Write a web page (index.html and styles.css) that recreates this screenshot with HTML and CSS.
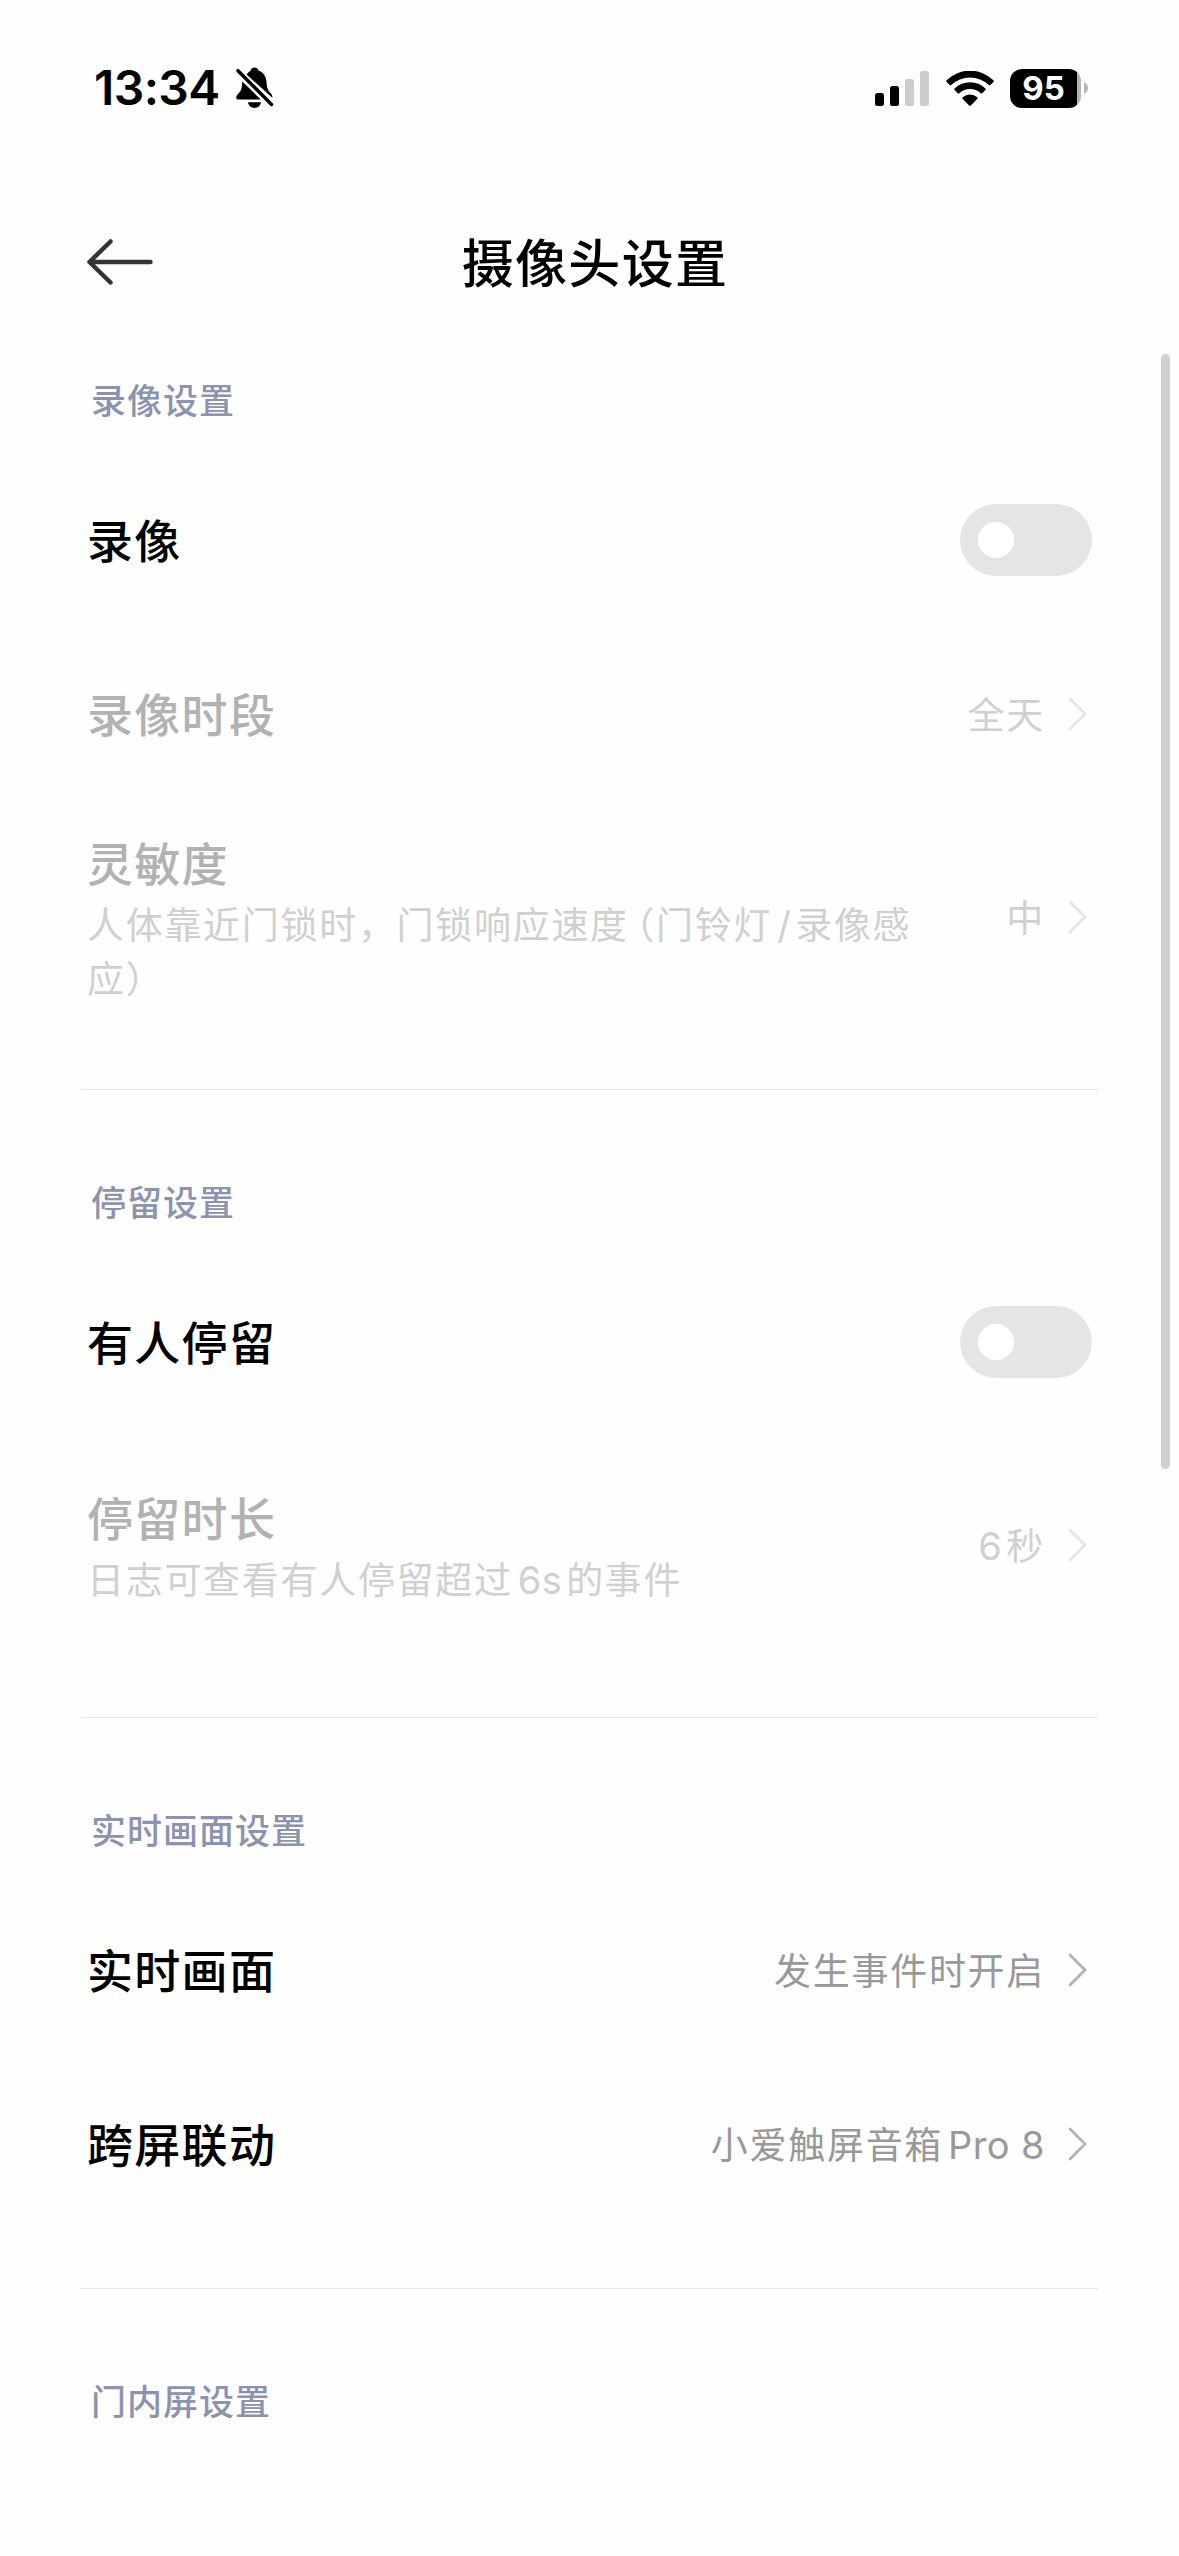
FILE: index.html
```html
<!DOCTYPE html>
<html lang="zh-CN">

<head>
    <meta charset="UTF-8">
    <meta name="viewport" content="width=device-width, initial-scale=1.0" />
    <title>摄像头设置</title>
    <link rel="stylesheet" href="styles.css">
</head>

<body>
    <!-- Status Bar -->
    <div class="status-bar">
        <div class="status-left">
            <span class="time">13:34</span>
            <svg class="bell" width="38" height="42" viewBox="0 0 38 42">
                <path d="M10.5 7.5C12.5 5 14 4.200 14.800 3.500C15 1.500 16.500 0.500 18.500 0.500C20.500 0.500 22 1.500 22.400 3.500C27.500 5.500 30.200 9.500 30.500 15C30.900 21 32 23.500 34.500 26C36 27.500 36.600 29 36.300 30.800Z" />
                <path d="M6.300 14.500L24.800 32.500H2.500C0.800 32.500 0 31.500 0.300 29.800C0.700 27.500 3.500 26 4.800 23.500C6 21 6.100 17.500 6.300 14.500Z" />
                <path d="M12 35.300H25C24.500 38.800 22 41 18.500 41C15 41 12.500 38.800 12 35.300Z" />
                <path class="slash" d="M2 3.700L35.500 37.500" />
            </svg>
        </div>
        <div class="status-right">
            <svg class="signal" width="54" height="35" viewBox="0 0 54 35">
                <rect x="0" y="22" width="9" height="13" rx="2.500" />
                <rect x="15" y="15" width="9" height="20" rx="2.500" />
                <rect class="off" x="30" y="8" width="9" height="27" rx="2.500" />
                <rect class="off" x="45" y="0" width="9" height="35" rx="2.500" />
            </svg>
            <svg class="wifi" width="48" height="35" viewBox="0 0 48 35">
                <path d="M0.600 9.200A33.500 33.500 0 0 1 47.400 9.200C47.900 9.800 47.900 10.400 47.400 10.900L44.400 13.900C43.900 14.400 43.300 14.400 42.800 13.900A27.500 27.500 0 0 0 5.200 13.900C4.700 14.400 4.100 14.400 3.600 13.900L0.600 10.900C0.100 10.400 0.100 9.800 0.600 9.200Z" />
                <path d="M8.600 17.400A22.300 22.300 0 0 1 39.400 17.400C39.900 17.900 39.900 18.500 39.400 19L36.200 22.200C35.700 22.700 35.100 22.700 34.600 22.200A15.600 15.600 0 0 0 13.400 22.200C12.900 22.700 12.300 22.700 11.800 22.200L8.600 19C8.100 18.500 8.100 17.900 8.600 17.400Z" />
                <path d="M16.700 26.200A11.500 11.500 0 0 1 31.300 26.200C31.900 26.700 31.900 27.300 31.400 27.800L24.900 34.400C24.300 35 23.700 35 23.100 34.400L16.600 27.800C16.100 27.300 16.100 26.700 16.700 26.200Z" />
            </svg>
            <div class="battery">
                <div class="battery-body">95</div>
                <svg class="battery-tip" width="4" height="12" viewBox="0 0 4 12">
                    <path d="M0 0C2.500 1.500 4 3.500 4 6C4 8.500 2.500 10.500 0 12Z" />
                </svg>
            </div>
        </div>
    </div>

    <!-- Header -->
    <header class="nav-bar">
        <svg class="back" width="68" height="48" viewBox="0 0 68 48">
            <path d="M24.500 3.500L3.500 24L24.500 44.500M3.500 24H64.500" />
        </svg>
        <h1>摄像头设置</h1>
    </header>

    <!-- Settings List -->
    <main>
        <section class="group">
            <h2>录像设置</h2>
            <div class="row">
                <div class="label">录像</div>
                <div class="switch"></div>
            </div>
            <div class="row disabled">
                <div class="label">录像时段</div>
                <div class="value">
                    <div>全天</div>
                    <svg class="arrow" width="22" height="36" viewBox="0 0 22 36"><path d="M3 3L18 18L3 33" /></svg>
                </div>
            </div>
            <div class="row tall disabled">
                <div class="text">
                    <div class="label">灵敏度</div>
                    <div class="desc">人体靠近门锁时，门锁响应速度<span class="paren">（</span>门铃灯<span class="latin">/</span>录像感应）</div>
                </div>
                <div class="value">
                    <div>中</div>
                    <svg class="arrow" width="22" height="36" viewBox="0 0 22 36"><path d="M3 3L18 18L3 33" /></svg>
                </div>
            </div>
        </section>

        <section class="group">
            <h2>停留设置</h2>
            <div class="row">
                <div class="label">有人停留</div>
                <div class="switch"></div>
            </div>
            <div class="row tall disabled">
                <div class="text">
                    <div class="label">停留时长</div>
                    <div class="desc">日志可查看有人停留超过<span class="latin">6s</span>的事件</div>
                </div>
                <div class="value">
                    <div><span class="latin">6</span>秒</div>
                    <svg class="arrow" width="22" height="36" viewBox="0 0 22 36"><path d="M3 3L18 18L3 33" /></svg>
                </div>
            </div>
        </section>

        <section class="group">
            <h2>实时画面设置</h2>
            <div class="row">
                <div class="label">实时画面</div>
                <div class="value">
                    <div>发生事件时开启</div>
                    <svg class="arrow" width="22" height="36" viewBox="0 0 22 36"><path d="M3 3L18 18L3 33" /></svg>
                </div>
            </div>
            <div class="row">
                <div class="label">跨屏联动</div>
                <div class="value">
                    <div>小爱触屏音箱<span class="latin last">Pro 8</span></div>
                    <svg class="arrow" width="22" height="36" viewBox="0 0 22 36"><path d="M3 3L18 18L3 33" /></svg>
                </div>
            </div>
        </section>

        <section class="group">
            <h2>门内屏设置</h2>
        </section>
    </main>

    <div class="scrollbar"></div>
</body>

</html>
```

FILE: styles.css
```css
* {
    margin: 0;
    padding: 0;
    box-sizing: border-box;
}

body {
    position: relative;
    height: 2556px;
    overflow: hidden;
    background-color: #fefefe;
    color: #000;
    font-family: "Noto Sans CJK SC", sans-serif;
}

svg {
    display: block;
    flex-shrink: 0;
}

/* Status Bar */
.status-bar {
    display: flex;
    justify-content: space-between;
    align-items: center;
    height: 176px;
    padding: 0 91px 0 94px;
    font-family: Inter, sans-serif;
}

.status-left,
.status-right {
    display: flex;
    align-items: center;
}

.time {
    width: 142px;
    font-size: 48px;
    font-weight: 600;
    letter-spacing: -0.6px;
    line-height: 58px;
}

.bell .slash {
    fill: none;
    stroke: #000;
    stroke-width: 3.5;
    stroke-linecap: round;
}

.signal {
    margin-right: 17px;
}

.signal .off {
    fill: #ccc;
}

.wifi {
    margin-right: 16px;
}

.battery {
    display: flex;
    align-items: center;
    gap: 3px;
}

.battery-body {
    width: 71px;
    height: 39px;
    padding-right: 4px;
    border-radius: 12px;
    background: linear-gradient(to right, #000 67px, #b3b3b3 67px);
    color: #fff;
    font-size: 33px;
    font-weight: 700;
    line-height: 39px;
    text-align: center;
}

.battery-tip {
    fill: #b3b3b3;
}

/* Header */
.nav-bar {
    display: grid;
    grid-template-columns: 68px 1fr 68px;
    align-items: center;
    height: 171px;
    padding: 0 81px 0 86px;
}

.nav-bar h1 {
    padding: 0 0 2px 6px;
    font-size: 52px;
    font-weight: 500;
    letter-spacing: 1.3px;
    line-height: 76px;
    text-align: center;
}

.back path {
    fill: none;
    stroke: #333;
    stroke-width: 4.5;
    stroke-linecap: round;
    stroke-linejoin: round;
}

/* Setting groups */
.group {
    margin: 0 81px;
    padding-bottom: 56.2px;
    border-bottom: 1px solid #e5e5e5;
}

.group + .group {
    padding-top: 59px;
}

.group:last-child {
    border-bottom: none;
}

.group h2 {
    height: 106px;
    padding-left: 10px;
    color: #8c93b0;
    font-size: 35px;
    font-weight: 500;
    letter-spacing: 1px;
    line-height: 104px;
}

.row {
    display: flex;
    justify-content: space-between;
    align-items: center;
    height: 174px;
    padding: 0 6px;
}

.row.tall {
    height: 232px;
}

.row > .label {
    padding-bottom: 4px;
}

.text {
    width: 840px;
}

.label {
    font-size: 46px;
    font-weight: 500;
    letter-spacing: 1.3px;
    line-height: 62px;
}

.desc {
    margin-top: 4px;
    color: #d0d0d0;
    font-size: 37px;
    letter-spacing: 1.7px;
    line-height: 54px;
}

.value {
    display: flex;
    align-items: center;
    padding-right: 3px;
    color: #999;
    font-size: 37px;
    letter-spacing: 1.7px;
    line-height: 54px;
    white-space: nowrap;
}

.value div {
    padding-bottom: 2px;
}

.arrow {
    margin-left: 22px;
}

.arrow path {
    fill: none;
    stroke: #b2b2b2;
    stroke-width: 2.8;
    stroke-linecap: round;
    stroke-linejoin: round;
}

/* Latin letters and digits between Chinese characters */
.latin {
    margin: 0 4px 0 5px;
    font-family: Inter, sans-serif;
    font-size: 38px;
    letter-spacing: 0.4px;
    line-height: 1;
}

.latin.last {
    margin-right: 0;
}

/* Half-width form of the opening bracket */
.paren {
    margin-left: 7px;
    font-feature-settings: "halt";
}

.disabled .label {
    color: #b2b2b2;
}

.disabled .value {
    color: #d0d0d0;
}

.disabled .arrow path {
    stroke: #e5e5e5;
}

/* Switch (off) */
.switch {
    width: 132px;
    height: 72px;
    padding: 18px;
    border-radius: 36px;
    background-color: #e5e5e5;
}

.switch::before {
    content: "";
    display: block;
    width: 36px;
    height: 36px;
    border-radius: 50%;
    background-color: #fff;
}

.scrollbar {
    position: absolute;
    top: 354px;
    right: 9px;
    width: 9px;
    height: 1115px;
    border-radius: 5px;
    background-color: #d0d0d0;
}
```
